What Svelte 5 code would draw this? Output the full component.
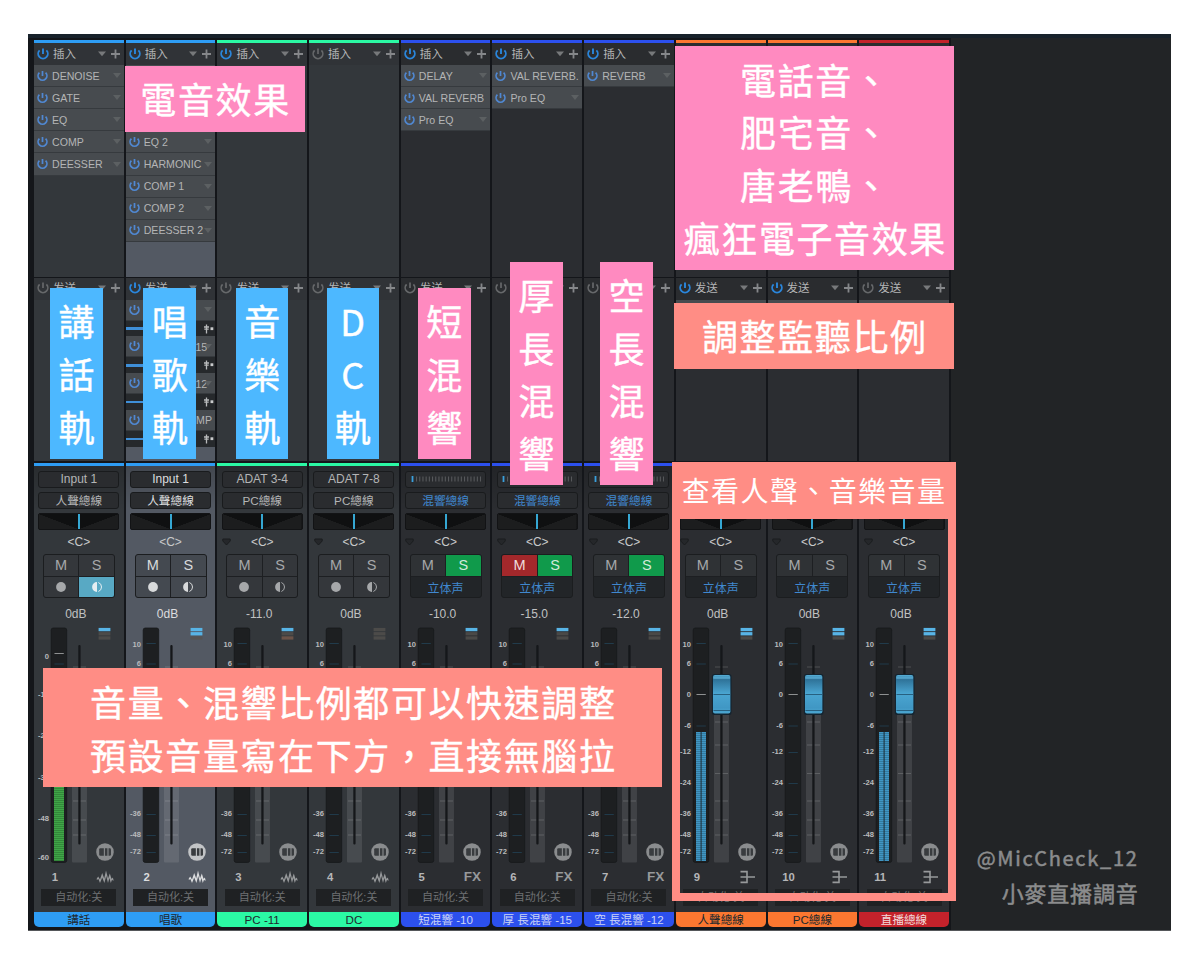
<script>
    const BLUE = '#2e9df5';
    const GREEN = '#2bf9a4';
    const INDIGO = '#2c50ee';
    const ORANGE = '#fb7730';
    const RED = '#c3222b';

    const channels = [
        {
            num: 1, name: '講話', color: BLUE, kind: 'audio', input: 'Input 1', bus: '人聲總線', db: '0dB',
            insertsOn: true, inserts: ['DENOISE', 'GATE', 'EQ', 'COMP', 'DEESSER'],
            monitor: true, lamps: [1, 0, 0], meter: { color: '#3fa647', top: 130, split: false }
        },
        {
            num: 2, name: '唱歌', color: BLUE, kind: 'audio', input: 'Input 1', bus: '人聲總線', db: '0dB',
            selected: true, insertsOn: true,
            inserts: ['', '', '', 'EQ 2', 'HARMONIC', 'COMP 1', 'COMP 2', 'DEESSER 2'],
            sendsOn: true, sends: ['', '厚 長混響 -15', '空 長混響 -12', 'SIDE 2 COMP'],
            lamps: [1, 1, 0]
        },
        { num: 3, name: 'PC -11', color: GREEN, kind: 'audio', input: 'ADAT 3-4', bus: 'PC總線', db: '-11.0', insertsOn: true, lamps: [1, 0, 2] },
        { num: 4, name: 'DC', color: GREEN, kind: 'audio', input: 'ADAT 7-8', bus: 'PC總線', db: '0dB', lamps: [0, 0, 0] },
        { num: 5, name: '短混響 -10', color: INDIGO, kind: 'fx', bus: '混響總線', db: '-10.0', solo: true, insertsOn: true, inserts: ['DELAY', 'VAL REVERB', 'Pro EQ'], lamps: [1, 0, 0] },
        { num: 6, name: '厚 長混響 -15', color: INDIGO, kind: 'fx', bus: '混響總線', db: '-15.0', mute: true, solo: true, insertsOn: true, inserts: ['VAL REVERB.', 'Pro EQ'], lamps: [1, 0, 0] },
        { num: 7, name: '空 長混響 -12', color: INDIGO, kind: 'fx', bus: '混響總線', db: '-12.0', solo: true, insertsOn: true, inserts: ['REVERB'], lamps: [1, 0, 0] },
        { num: 9, name: '人聲總線', color: ORANGE, kind: 'bus', db: '0dB', insertsOn: true, sendsOn: true, sends: [''], lamps: [1, 1, 0], meter: { color: '#4096c4', top: 107, split: true } },
        { num: 10, name: 'PC總線', color: ORANGE, kind: 'bus', db: '0dB', insertsOn: true, sendsOn: true, sends: [''], lamps: [1, 1, 0] },
        { num: 11, name: '直播總線', color: RED, kind: 'bus', db: '0dB', sends: [''], lamps: [1, 1, 0], meter: { color: '#4096c4', top: 107, split: true } }
    ];

    // label, y of label, y of tick
    const busScale = [
        ['10', 19, 18.5], ['6', 38, 39], ['0', 69, 69.5], ['-6', 100.5, 101], ['-12', 126, 127.5],
        ['-24', 157, 158.5], ['-36', 188, 189.5], ['-48', 209, 210.5], ['-72', 226, 227.5]
    ];
    const inputScale = [
        ['0', 31, 28.5], ['-12', 69, 39], ['-24', 110, 108], ['-36', 152, 150], ['-48', 193, 191], ['-60', 232, 232]
    ];
    // the volume note lies over the middle of these faders
    const coveredScale = busScale.filter(([, y]) => y < 45 || y > 160);
    const faderTicks = [97, 120, 148.5, 176, 195, 210];
    const lampColors = ['#55534f', '#58b4e6', '#6b5348'];

    function getScale(ch) {
        if (ch.num === 1) return inputScale;
        return ch.kind === 'bus' ? busScale : coveredScale;
    }

    const notes = [
        { lines: ['電音效果'], tone: 'pink', x: 125, y: 66, w: 179.5, h: 65.5 },
        { lines: ['電話音、', '肥宅音、', '唐老鴨、', '瘋狂電子音效果'], tone: 'pink', x: 675, y: 46, w: 279, h: 224 },
        { lines: ['調整監聽比例'], tone: 'salmon', x: 674, y: 302.5, w: 280, h: 66 },
        { lines: ['音量、混響比例都可以快速調整', '預設音量寫在下方，直接無腦拉'], tone: 'salmon', x: 43, y: 668, w: 619, h: 119 },
        { lines: [...'講話軌'], tone: 'blue', x: 50, y: 288, w: 53, h: 170.5 },
        { lines: [...'唱歌軌'], tone: 'blue', x: 143.3, y: 288, w: 52.7, h: 170.5 },
        { lines: [...'音樂軌'], tone: 'blue', x: 236, y: 288, w: 52.3, h: 170.5 },
        { lines: [...'DC軌'], tone: 'blue', x: 326.5, y: 288, w: 52.5, h: 170.5 },
        { lines: [...'短混響'], tone: 'pink', x: 418, y: 288, w: 52.7, h: 170.5 },
        { lines: [...'厚長混響'], tone: 'pink', x: 510, y: 261.5, w: 52.5, h: 223.5 },
        { lines: [...'空長混響'], tone: 'pink', x: 600, y: 261.5, w: 53, h: 223.5 }
    ];
</script>

{#snippet power(on)}
    <svg class="power" class:on width="12" height="12" viewBox="0 0 12 12">
        <path d="M2.6 2.4A4.8 4.8 0 1 0 9.4 2.4M6 .6V6" />
    </svg>
{/snippet}

{#snippet rackHead(title, on)}
    <div class="rack-head">
        {@render power(on)}
        <span class="rack-title">{title}</span>
        <svg width="24" height="10" viewBox="0 0 24 10">
            <path d="M0 2.5H8L4 7.2Z" fill="#77797b" />
            <path d="M13 5H22M17.5 .5V9.5" stroke="#85878a" stroke-width="1.8" />
        </svg>
    </div>
{/snippet}

{#snippet deviceRow(name)}
    <div class="insert">
        {@render power(true)}
        <span class="insert-name">{name}</span>
        {#if name.length < 10}
            <i class="caret"></i>
        {/if}
    </div>
{/snippet}

{#snippet faderBlock(ch)}
    <svg class="fader" width="89.7" height="240" viewBox="0 0 89.7 240">
        <rect x="17.2" y="3" width="15.5" height="234.5" rx="2" fill="#1d1f21" stroke="#17191b" stroke-width=".8" />
        {#each getScale(ch) as [label, y, tick]}
            <text x="15" y={y + 2.7} text-anchor="end">{label}</text>
            <path d="M20.5 {tick}H29.8" stroke={label === '0' ? '#8f9192' : '#213b4b'} />
        {/each}
        {#if ch.meter}
            <rect x="20" y={ch.meter.top} width="10" height={236 - ch.meter.top} fill={ch.meter.color} />
            {#each Array(Math.floor((236 - ch.meter.top) / 2)) as _, i}
                <rect x="20" y={ch.meter.top + 1.4 + i * 2} width="10" height=".6" fill="#000" opacity=".3" />
            {/each}
            {#if ch.meter.split}
                <rect x="24.6" y={ch.meter.top} width="1" height={236 - ch.meter.top} fill="#1b2a34" />
            {/if}
        {/if}

        <rect x="38" y="89" width="15" height="148.5" rx="1" fill="#fff" opacity=".1" />
        <path d="M39 42H52" stroke="#fff" opacity=".16" />
        {#each faderTicks as y}
            <path d="M39 {y}H52" stroke="#fff" opacity=".16" />
        {/each}
        <rect x="44.3" y="20" width="2.3" height="199.5" rx="1" fill="#15171a" />
        <rect x="35.9" y="49" width="19.6" height="41" rx="2.5" fill="#142430" />
        <rect x="37" y="50" width="17.4" height="38.6" rx="2" fill="url(#cap)" />
        <path d="M37.5 69.5H54M37.5 85.5H54" stroke="#275f7f" />
        <path d="M37.5 53H54" stroke="#6cc0e6" stroke-width=".8" />

        {#each ch.lamps as lamp, i}
            <rect x="64.6" y={2.9 + i * 4.2} width="11.8" height="3.3" fill={lampColors[lamp]} opacity={lamp ? 1 : 0.75} />
        {/each}

        <circle cx="71" cy="227" r="8.8" fill={ch.selected ? '#c2c4c6' : '#8a8c8e'} />
        <rect x="65.2" y="223.2" width="11.8" height="7.6" rx="1.2" fill="#393c3f" />
        <path d="M70.4 223V231M74 223V231" stroke={ch.selected ? '#c2c4c6' : '#8a8c8e'} stroke-width="1.1" />
    </svg>
{/snippet}

<svg class="defs" width="0" height="0">
    <linearGradient id="cap" x1="0" y1="0" x2="0" y2="1">
        <stop offset="0" stop-color="#56aed6" />
        <stop offset=".12" stop-color="#2f7399" />
        <stop offset=".48" stop-color="#4aa5d1" />
        <stop offset=".85" stop-color="#4097c4" />
        <stop offset="1" stop-color="#4da8d2" />
    </linearGradient>
</svg>

<main class="page">
    <div class="mixer">
        <div class="channels">
            {#each channels as ch}
                <section class="channel {ch.kind}" class:selected={ch.selected}>
                    <div class="strip" style="background: {ch.color}"></div>
                    <div class="rack inserts">
                        {@render rackHead(ch.kind === 'bus' ? '' : '插入', ch.insertsOn)}
                        {#each ch.inserts ?? [] as insert}
                            {@render deviceRow(insert)}
                        {/each}
                    </div>
                    <div class="rack sends">
                        {@render rackHead('发送', ch.sendsOn)}
                        {#each ch.sends ?? [] as send}
                            {@render deviceRow(send)}
                            <div class="send-level">
                                <i class="level"></i>
                                <svg width="12" height="10" viewBox="0 0 12 10">
                                    <path d="M3.5 .5V9.5M1 3H6M1.3 5.2H5.7" stroke="#b9bbbc" stroke-width="1.3" />
                                    <rect x="7.5" y="3.3" width="2.8" height="2.8" fill="#c9cbcc" />
                                </svg>
                            </div>
                        {/each}
                    </div>

                    <div class="strip" style="background: {ch.color}"></div>
                    <div class="console">
                        <div class="slot">
                            {#if ch.input}
                                {ch.input}
                            {:else}
                                <svg width="70" height="7" viewBox="0 0 70 7">
                                    <path d="M1.5 0V6" stroke="#3aa0dc" stroke-width="1.8" />
                                    <path d="M5 3H70" stroke="#56585b" stroke-width="5" stroke-dasharray="1.1 2.1" />
                                </svg>
                            {/if}
                        </div>
                        <div class="slot out">{ch.bus ?? ''}</div>
                        <div class="pan"><i></i></div>
                        <div class="pan-value">
                            {#if ch.num > 2}
                                <svg width="9" height="8" viewBox="0 0 9 8">
                                    <path d="M.8 1H8.2V3L4.5 7 .8 3Z" fill="#25272a" stroke="#1b1d1f" />
                                </svg>
                            {/if}
                            &lt;C&gt;
                        </div>
                        <div class="buttons">
                            <span class="btn" class:mute={ch.mute}>M</span>
                            <span class="btn" class:solo={ch.solo}>S</span>
                            {#if ch.kind === 'audio'}
                                <span class="btn">
                                    <svg width="12" height="12" viewBox="0 0 12 12"><circle cx="6" cy="6" r="4.9" fill="currentColor" /></svg>
                                </span>
                                <span class="btn" class:monitor={ch.monitor}>
                                    <svg width="12" height="12" viewBox="0 0 12 12">
                                        <path d="M6 1.1A4.9 4.9 0 0 0 6 10.9Z" fill="currentColor" />
                                        <path d="M7.4 1.5A4.8 4.8 0 0 1 7.4 10.5" fill="none" stroke="currentColor" stroke-width="1" />
                                    </svg>
                                </span>
                            {:else}
                                <span class="stereo">立体声</span>
                            {/if}
                        </div>
                        <div class="db">{ch.db}</div>
                        {@render faderBlock(ch)}
                        <div class="foot">
                            <b class="num">{ch.num}</b>
                            {#if ch.kind === 'audio'}
                                <svg width="18" height="14" viewBox="0 0 18 14">
                                    <path d="M.8 10V8.5L2.2 6.6 4 9.4 6.2 3 8.2 8.6 10 .4 12 8.6 13.8 3.4 15.6 9 16.4 7.4 17.4 9V11L16 9.8 14.8 13 13.4 8 12 13 10.2 6 8.4 13 6.2 7.6 4 13 2.4 9Z" fill="currentColor" />
                                </svg>
                            {:else if ch.kind === 'fx'}
                                <b class="fx-tag">FX</b>
                            {:else}
                                <svg width="18" height="14" viewBox="0 0 18 14">
                                    <path d="M2.5 1.6H9M2.5 7H17M2.5 12.4H9M9 .8V13.2" fill="none" stroke="currentColor" stroke-width="1.6" />
                                </svg>
                            {/if}
                        </div>
                        <div class="automation">自动化:关</div>
                    </div>
                    <div class="name" style="background: {ch.color}">{ch.name}</div>
                </section>
            {/each}
        </div>
        <footer class="credit">
            <span class="handle">@MicCheck_12</span>
            <span class="studio">小麥直播調音</span>
        </footer>
    </div>

    {#each notes as note}
        <div class="note {note.tone}" style="left: {note.x}px; top: {note.y}px; width: {note.w}px; height: {note.h}px">
            {#each note.lines as line}
                <span>{line}</span>
            {/each}
        </div>
    {/each}
    <div class="watch">
        <span>查看人聲、音樂音量</span>
    </div>
</main>

<style>
    :global(body) {
        margin: 0;
        background: #fff;
    }

    .defs {
        position: absolute;
    }

    .page {
        position: relative;
        box-sizing: border-box;
        width: 1200px;
        height: 966px;
        padding: 34px 29.5px 35px 27.5px;
        overflow: hidden;
        background: #fff;
        font-family: "Liberation Sans", "Noto Sans CJK TC", sans-serif;
        color: #b4b5b6;
    }

    .mixer {
        display: flex;
        justify-content: space-between;
        box-sizing: border-box;
        height: 897px;
        background: #222426;
        border-top: 4px solid #18222b;
        border-bottom: 1px solid #55575a;
    }

    .channels {
        display: grid;
        grid-template-columns: repeat(10, 89.7px);
        gap: 2px;
        padding: 1.6px 2px 4px 6.5px;
        background: #14161a;
    }

    .channel {
        --panel: #33373b;
        display: flex;
        flex-direction: column;
        min-width: 0;
    }

    .fx,
    .bus {
        --panel: #2b2d31;
    }

    .selected {
        --panel: #535963;
    }

    .strip {
        height: 3.2px;
        flex: none;
    }

    .rack {
        box-sizing: border-box;
        background: var(--panel);
        flex: none;
    }

    .inserts {
        height: 233.7px;
        margin-top: .7px;
    }

    .sends {
        height: 182.5px;
        margin: 1.3px 0 1.7px;
    }

    .rack-head {
        display: flex;
        align-items: center;
        box-sizing: border-box;
        height: 21.5px;
        padding: 0 2px 0 3px;
        background: #303337;
    }

    .fx .rack-head,
    .bus .rack-head {
        background: #2a2c2f;
    }

    .rack-title {
        flex: 1;
        padding-left: 4px;
        font: 11.5px/20px "Liberation Sans", "Noto Sans CJK SC", sans-serif;
    }

    .sends .rack-head {
        height: 21.2px;
        padding-bottom: 2px;
    }

    .power {
        flex: none;
        fill: none;
        stroke: #66686a;
        stroke-width: 1.7;
    }

    .power.on {
        stroke: #2a86dc;
        stroke-width: 1.9;
    }

    .insert .power.on {
        stroke: #5088d2;
        width: 11px;
    }

    .insert {
        display: flex;
        align-items: center;
        box-sizing: border-box;
        height: 22.13px;
        padding: 0 3px;
        border-bottom: 1px solid #363a3e;
        background: #474b4f;
        font-size: 10.6px;
        white-space: nowrap;
    }

    .insert-name {
        flex: 1;
        min-width: 0;
        margin-right: -4px;
        padding-left: 4px;
    }

    .caret {
        width: 0;
        border: 4px solid transparent;
        border-top: 5px solid #5c6062;
        border-bottom: 0;
    }

    .sends .insert {
        height: 21px;
    }

    .send-level {
        display: flex;
        align-items: center;
        height: 15.8px;
        background: #26292c;
    }

    .level {
        flex: 1;
        height: 2.6px;
        margin-right: 12px;
        background: #3f8fd8;
    }

    .console {
        display: flex;
        flex-direction: column;
        align-items: center;
        box-sizing: border-box;
        height: 446px;
        padding-top: 5px;
        background: linear-gradient(#0003, transparent 45px), var(--panel);
        flex: none;
    }

    .slot {
        display: flex;
        align-items: center;
        justify-content: center;
        box-sizing: border-box;
        width: 81px;
        height: 17px;
        margin-bottom: 4px;
        border: 1px solid #191b1d;
        border-radius: 3px;
        background: #2a2c2f;
        font-size: 12px;
        line-height: 15px;
        white-space: nowrap;
        flex: none;
    }

    .out {
        font-size: 11.7px;
    }

    .fx .out,
    .stereo {
        color: #4088cf;
    }

    .pan {
        display: flex;
        justify-content: center;
        box-sizing: border-box;
        width: 81px;
        height: 17px;
        border: 1px solid #121315;
        border-radius: 2px;
        background: linear-gradient(to top right, #1c1d1e 49%, transparent 50%) left / 50% 100% no-repeat,
            linear-gradient(to top left, #1c1d1e 49%, transparent 50%) right / 50% 100% no-repeat, #0f1011;
        flex: none;
    }

    .pan i {
        width: 2px;
        background: #35a7d3;
    }

    .pan-value {
        display: flex;
        align-items: center;
        justify-content: center;
        width: 86px;
        height: 24px;
        font-size: 12px;
        color: #c8c9ca;
        flex: none;
    }

    .pan-value svg {
        margin: 0 20px 0 -29px;
    }

    .buttons {
        display: grid;
        grid-template-columns: 1fr 1fr;
        grid-template-rows: 21px 21px;
        gap: 1px;
        box-sizing: border-box;
        width: 72px;
        height: 44px;
        border: 1px solid #1b1d1f;
        border-radius: 3px;
        background: #1d1f22;
        overflow: hidden;
        flex: none;
    }

    .btn,
    .stereo {
        display: flex;
        align-items: center;
        justify-content: center;
        background: #34373b;
        font-size: 14.5px;
    }

    .btn {
        color: #a6a8aa;
    }

    .selected .btn {
        background: #444950;
        color: #d8dadb;
    }

    .fx .btn,
    .bus .btn {
        background: #2f3235;
    }

    .stereo {
        grid-column: 1 / 3;
        background: #222528;
        font-size: 12px;
        font-family: "Noto Sans CJK SC", sans-serif;
    }

    .btn.monitor {
        background: #58a9c4;
        color: #e4eef2;
    }

    .fx .btn.solo {
        background: #109a4b;
        color: #d3e9da;
    }

    .fx .btn.mute {
        background: #a3282b;
        color: #efdcdc;
    }

    .db {
        width: 84px;
        height: 27px;
        font-size: 12px;
        line-height: 33px;
        text-align: center;
        margin-right: 6px;
        color: #c0c1c2;
        flex: none;
    }

    .fader {
        display: block;
        flex: none;
    }

    .fader text {
        font: bold 7.6px "Liberation Sans", sans-serif;
        fill: #b9babb;
    }

    .foot {
        display: flex;
        align-items: center;
        justify-content: space-between;
        box-sizing: border-box;
        width: 100%;
        height: 24px;
        padding: 0 9.5px 0 10px;
        color: #97999b;
        flex: none;
    }

    .num {
        width: 22px;
        font-size: 11.3px;
        text-align: center;
        color: #b5b6b8;
    }

    .fx-tag {
        font-size: 13.5px;
    }

    .selected .foot,
    .selected .num,
    .selected .slot,
    .selected .db {
        color: #dcdddf;
    }

    .automation {
        width: 75px;
        height: 17px;
        background: #1f2123;
        font: 11px/17px "Liberation Sans", "Noto Sans CJK SC", sans-serif;
        text-align: center;
        color: #6e7072;
        flex: none;
    }

    .name {
        height: 15.5px;
        border-radius: 0 0 5px 5px;
        color: #20282e;
        font-size: 11.6px;
        line-height: 15px;
        text-align: center;
        white-space: nowrap;
        flex: none;
    }

    .fx .name {
        color: #cdd5f5;
    }

    .channel:last-child .name {
        color: #f2dcdc;
    }

    .credit {
        display: flex;
        flex-direction: column;
        justify-content: flex-end;
        align-items: flex-end;
        padding: 0 32px 21px 0;
        color: #8b8c8d;
        white-space: nowrap;
        -webkit-text-stroke: .5px currentColor;
    }

    .handle {
        font: 20px/34px "Noto Sans CJK TC", sans-serif;
        letter-spacing: 1.7px;
    }

    .studio {
        font: 22px/34px "Noto Sans CJK TC", sans-serif;
        letter-spacing: .8px;
    }

    .note {
        position: absolute;
        display: flex;
        flex-direction: column;
        align-items: center;
        justify-content: center;
        color: #fff;
        font-family: "Noto Sans CJK TC", sans-serif;
        font-size: 36px;
        line-height: 52.6px;
        letter-spacing: 1.6px;
        white-space: nowrap;
        -webkit-text-stroke: .4px #fff;
    }

    .note span {
        margin-right: -1.6px;
    }

    .pink {
        background: #ff8ac0;
    }

    .salmon {
        background: #ff8d85;
    }

    .blue {
        background: #4db8ff;
    }

    .watch {
        position: absolute;
        left: 672px;
        top: 462px;
        box-sizing: border-box;
        width: 284px;
        height: 439px;
        border: 8.5px solid #ff8d85;
        border-top: 0;
    }

    .watch span {
        display: block;
        height: 57px;
        background: #ff8d85;
        color: #fff;
        font: 28px/57px "Noto Sans CJK TC", sans-serif;
        letter-spacing: 1.4px;
        text-align: center;
        white-space: nowrap;
    }
</style>
